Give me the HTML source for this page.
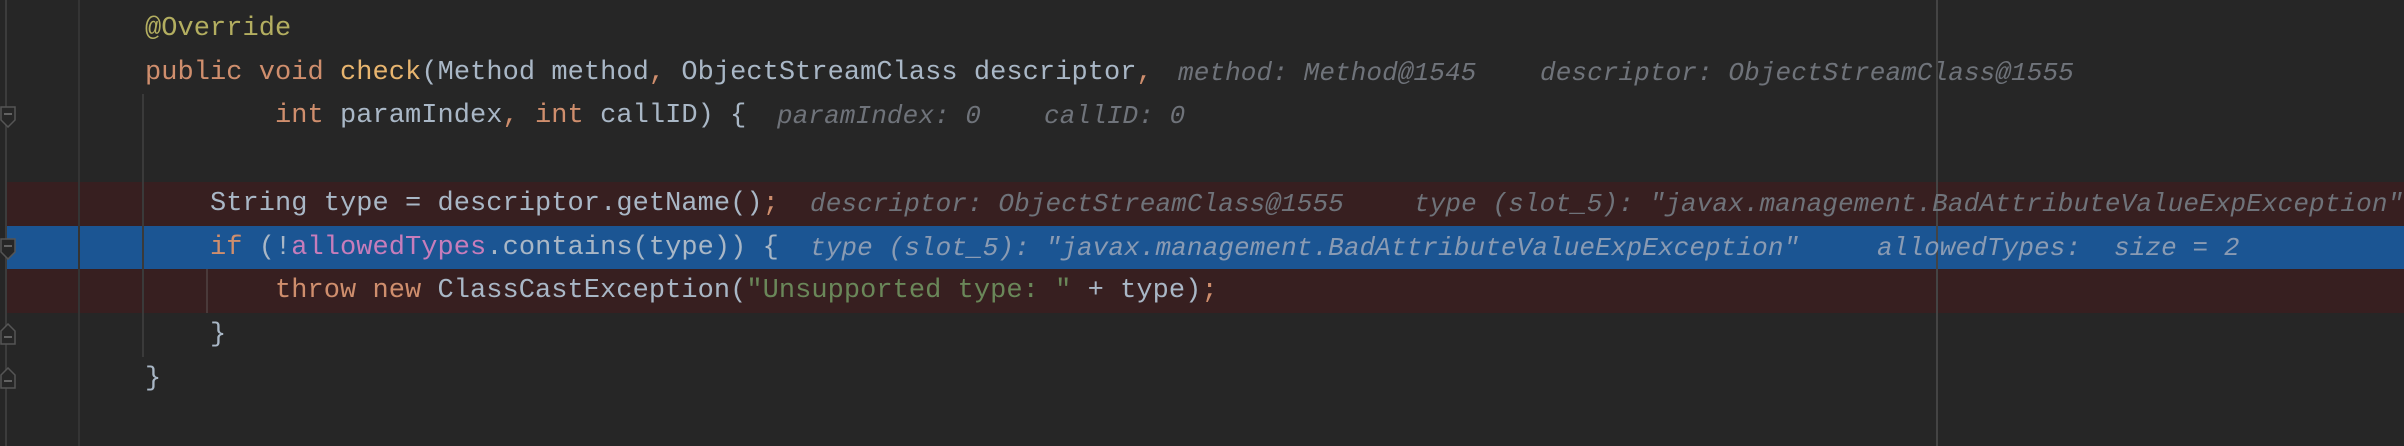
<!DOCTYPE html>
<html><head><meta charset="utf-8"><style>
html,body{margin:0;padding:0;}
body{width:2404px;height:446px;background:#262626;position:relative;overflow:hidden;font-family:"Liberation Mono",monospace;font-size:27px;letter-spacing:0.05px;color:#a9b7c6;}
.band{position:absolute;left:7px;right:0;height:44px;}
.ln{position:absolute;left:0;height:44px;line-height:44px;white-space:pre;}
.k{color:#cf8e6d}.a{color:#b3ae60}.m{color:#e8b56f}.s{color:#6a8759}.f{color:#c77dbb}
.h{position:absolute;height:44px;line-height:44px;white-space:pre;color:#6f737a;font-style:italic;font-size:26px;letter-spacing:0.1px}
.vl{position:absolute;width:2px;background:#3a3a3a}
.fold{position:absolute;left:0;width:16px;height:22px;}
</style></head><body>
<div class="band" style="top:182px;background:#371f20"></div>
<div class="band" style="top:226px;height:43px;background:#1b5593"></div>
<div class="band" style="top:269px;background:#371f20"></div>
<div class="vl" style="left:5px;top:0;height:446px;background:#3c3c3c"></div>
<div class="vl" style="left:78px;top:0;height:446px;background:#343434"></div>
<div class="vl" style="left:142px;top:94px;height:263px;background:#3a3a3a"></div>
<div class="vl" style="left:206px;top:269px;height:44px;background:#4a3a3a"></div>
<div class="vl" style="left:1936px;top:0;height:446px;background:#444"></div>
<svg class="fold" style="top:106px" viewBox="0 0 16 22"><path d="M1 1H15V14L8 21L1 14Z" fill="#262626" stroke="#555" stroke-width="1.5"/><path d="M4 8H12" stroke="#777" stroke-width="1.5"/></svg>
<svg class="fold" style="top:238px" viewBox="0 0 16 22"><path d="M1 1H15V14L8 21L1 14Z" fill="#262626" stroke="#555" stroke-width="1.5"/><path d="M4 8H12" stroke="#777" stroke-width="1.5"/></svg>
<svg class="fold" style="top:323px" viewBox="0 0 16 22"><path d="M1 21H15V8L8 1L1 8Z" fill="#262626" stroke="#555" stroke-width="1.5"/><path d="M4 14H12" stroke="#777" stroke-width="1.5"/></svg>
<svg class="fold" style="top:367px" viewBox="0 0 16 22"><path d="M1 21H15V8L8 1L1 8Z" fill="#262626" stroke="#555" stroke-width="1.5"/><path d="M4 14H12" stroke="#777" stroke-width="1.5"/></svg>

<div class="ln" style="top:7px;left:145px"><span class="a">@Override</span></div>
<div class="ln" style="top:51px;left:145px"><span class="k">public void </span><span class="m">check</span>(Method method<span class="k">,</span> ObjectStreamClass descriptor<span class="k">,</span></div>
<div class="h" style="top:51px;left:1178px">method: Method@1545</div>
<div class="h" style="top:51px;left:1540px">descriptor: ObjectStreamClass@1555</div>
<div class="ln" style="top:94px;left:275px"><span class="k">int </span>paramIndex<span class="k">, int </span>callID) {</div>
<div class="h" style="top:94px;left:777px">paramIndex: 0</div>
<div class="h" style="top:94px;left:1044px">callID: 0</div>
<div class="ln" style="top:182px;left:210px">String type = descriptor.getName()<span class="k">;</span></div>
<div class="h" style="top:182px;left:810px">descriptor: ObjectStreamClass@1555</div>
<div class="h" style="top:182px;left:1414px">type (slot_5): "javax.management.BadAttributeValueExpException"</div>
<div class="ln" style="top:226px;left:210px"><span class="k">if </span>(!<span class="f">allowedTypes</span>.contains(type)) {</div>
<div class="h" style="top:226px;left:810px;color:#8a9bb3">type (slot_5): "javax.management.BadAttributeValueExpException"</div>
<div class="h" style="top:226px;left:1877px;color:#8a9bb3">allowedTypes:</div>
<div class="h" style="top:226px;left:2114px;color:#8a9bb3">size = 2</div>
<div class="ln" style="top:269px;left:275px"><span class="k">throw new </span>ClassCastException(<span class="s">"Unsupported type: "</span> + type)<span class="k">;</span></div>
<div class="ln" style="top:313px;left:210px">}</div>
<div class="ln" style="top:357px;left:145px">}</div>
</body></html>
